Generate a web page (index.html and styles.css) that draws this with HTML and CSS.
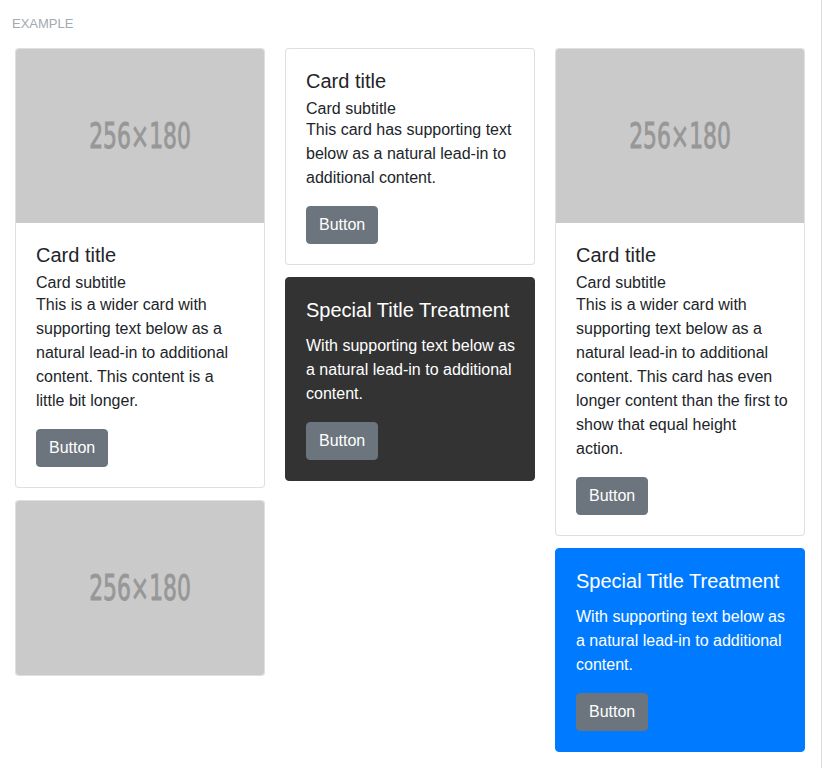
FILE: index.html
```html
<!DOCTYPE html>
<html lang="en">
<head>
<meta charset="utf-8">
<title>Card columns</title>
<link rel="stylesheet" href="styles.css">
</head>
<body>
<div class="page">
  <div class="label">Example</div>
  <div class="card-columns">
    <div class="column">
      <div class="card">
        <svg class="card-img" viewBox="0 0 256 180" preserveAspectRatio="none" aria-label="256x180">
          <rect width="256" height="180" fill="#cacaca"/>
          <text x="128" y="102" text-anchor="middle" textLength="105" lengthAdjust="spacingAndGlyphs" class="ph-text">256×180</text>
        </svg>
        <div class="card-body">
          <h5 class="card-title">Card title</h5>
          <h6 class="card-subtitle">Card subtitle</h6>
          <p class="card-text">This is a wider card with supporting text below as a natural lead-in to additional content. This content is a little bit longer.</p>
          <a class="btn" href="#">Button</a>
        </div>
      </div>
      <div class="card">
        <svg class="card-img card-img-full" viewBox="0 0 256 180" preserveAspectRatio="none" aria-label="256x180">
          <rect width="256" height="180" fill="#cacaca"/>
          <text x="128" y="102" text-anchor="middle" textLength="105" lengthAdjust="spacingAndGlyphs" class="ph-text">256×180</text>
        </svg>
      </div>
    </div>
    <div class="column">
      <div class="card">
        <div class="card-body">
          <h5 class="card-title">Card title</h5>
          <h6 class="card-subtitle">Card subtitle</h6>
          <p class="card-text card-text-wide">This card has supporting text below as a natural lead-in to additional content.</p>
          <a class="btn" href="#">Button</a>
        </div>
      </div>
      <div class="card card-dark">
        <div class="card-body">
          <h5 class="card-title">Special Title Treatment</h5>
          <p class="card-text card-text-wide">With supporting text below as a natural lead-in to additional content.</p>
          <a class="btn" href="#">Button</a>
        </div>
      </div>
    </div>
    <div class="column">
      <div class="card">
        <svg class="card-img" viewBox="0 0 256 180" preserveAspectRatio="none" aria-label="256x180">
          <rect width="256" height="180" fill="#cacaca"/>
          <text x="128" y="102" text-anchor="middle" textLength="105" lengthAdjust="spacingAndGlyphs" class="ph-text">256×180</text>
        </svg>
        <div class="card-body">
          <h5 class="card-title">Card title</h5>
          <h6 class="card-subtitle">Card subtitle</h6>
          <p class="card-text card-text-wide">This is a wider card with supporting text below as a natural lead-in to additional content. This card has even longer content than the first to show that equal height<br>action.</p>
          <a class="btn" href="#">Button</a>
        </div>
      </div>
      <div class="card card-primary">
        <div class="card-body">
          <h5 class="card-title">Special Title Treatment</h5>
          <p class="card-text card-text-wide">With supporting text below as a natural lead-in to additional content.</p>
          <a class="btn" href="#">Button</a>
        </div>
      </div>
    </div>
  </div>
</div>
</body>
</html>
```

FILE: styles.css
```css
html, body {
  margin: 0;
  padding: 0;
  background: #fff;
}

body {
  font-family: "Liberation Sans", Arial, sans-serif;
  font-size: 16px;
  line-height: 1.5;
  color: #212529;
}

.page {
  width: 790px;
  padding: 0 16px 0 15px;
  border-right: 1px solid #dcdcdc;
  min-height: 768px;
}

.label {
  padding-top: 14px;
  margin: 0 0 14px -3px;
  font-size: 13px;
  line-height: 20px;
  color: #a2a9b0;
  text-transform: uppercase;
}

.card-columns {
  display: flex;
  gap: 20px;
  align-items: flex-start;
}

.column {
  flex: 0 0 250px;
  display: flex;
  flex-direction: column;
  gap: 12px;
}

.card {
  border: 1px solid rgba(0, 0, 0, 0.125);
  border-radius: 4px;
  background: #fff;
  overflow: hidden;
}

.card-img {
  display: block;
  width: 248px;
  height: 174.375px;
}

.ph-text {
  font-family: "DejaVu Sans Condensed", "DejaVu Sans", sans-serif;
  font-stretch: condensed;
  font-size: 37px;
  fill: #979797;
  stroke: #979797;
  stroke-width: 0.9px;
}

.card-body {
  padding: 20px;
}

.card-title {
  margin: 0 0 12px;
  font-size: 20px;
  font-weight: 500;
  line-height: 1.2;
}

.card-subtitle {
  margin: -6px 0 0;
  font-size: 16px;
  font-weight: 500;
  line-height: 1.2;
}

.card-text {
  margin: 0 0 16px;
}

.card-text-wide {
  margin-right: -4px;
}

.btn {
  display: inline-block;
  padding: 6px 12px;
  font-size: 16px;
  line-height: 24px;
  color: #fff;
  background: #6c757d;
  border: 1px solid #6c757d;
  border-radius: 4px;
  text-decoration: none;
}

.card-dark {
  background: #333;
  border-color: #333;
  color: #fff;
}

.card-primary {
  background: #007bff;
  border-color: #007bff;
  color: #fff;
}
```
